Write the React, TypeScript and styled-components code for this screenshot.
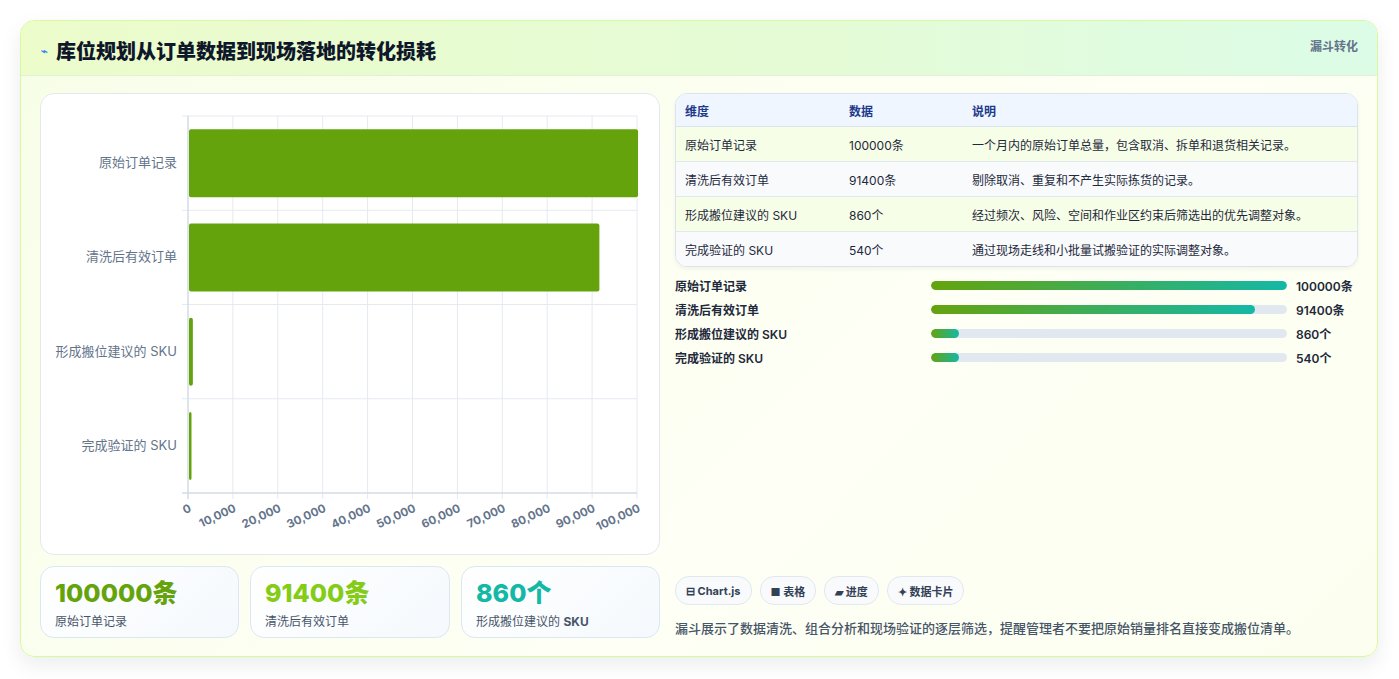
import React from "react";
import styled, { createGlobalStyle } from "styled-components";

const Global = createGlobalStyle`
  body { margin: 0; background: #fff; font-family: Inter, "Noto Sans CJK SC", sans-serif; }
`;
const Page = styled.div`padding: 20px 21px 22px 20px;`;
const Card = styled.div`
  border: 1px solid #d9f99d; border-radius: 14px; overflow: hidden;
  background: linear-gradient(135deg, #f7fee7 0%, #fefff5 60%, #fcfff0 100%);
  box-shadow: 0 8px 20px rgba(15,23,42,0.08);
`;
const Header = styled.div`
  height: 54px; display: flex; justify-content: space-between; align-items: flex-start;
  padding: 0 19px 0 20px; border-bottom: 1px solid #e2f0d5;
  background: linear-gradient(90deg, #ecfccb 0%, #e4fbd6 60%, #dcfce7 100%);
`;
const Title = styled.h1`
  margin: 15px 0 0; font-size: 20px; font-weight: 800; color: #0f172a; display: flex; align-items: center; gap: 8px;
`;
const Tag = styled.span`margin-top: 16px; font-size: 12px; font-weight: 700; color: #64748b;`;
const Body = styled.div`display: grid; grid-template-columns: 620px 1fr; gap: 15px; padding: 17px 19px 18px 19px;`;
const Left = styled.div`display: flex; flex-direction: column; gap: 11px;`;
const ChartBox = styled.div`
  height: 460px; background: #fff; border: 1px solid #e2e8f0; border-radius: 14px; position: relative;
`;
const Kpis = styled.div`display: grid; grid-template-columns: 199px 200px 199px; gap: 11px;`;
const Kpi = styled.div`
  height: 72px; border: 1px solid #dbe7f3; border-radius: 14px; background: linear-gradient(135deg, #fff, #f5f9fd);
  padding: 10px 14px; box-sizing: border-box;
`;
const KpiVal = styled.div<{ c: string }>`font-size: 25px; font-weight: 800; color: ${p => p.c}; line-height: 32px;`;
const KpiLbl = styled.div`font-size: 12px; color: #475569; margin-top: 3px;`;
const Right = styled.div`display: flex; flex-direction: column;`;
const Table = styled.table`
  width: 100%; border-collapse: separate; border-spacing: 0; border: 1px solid #dbe3ec; border-radius: 12px; overflow: hidden;
  font-size: 12px; color: #1e293b;
  box-shadow: 0 2px 4px rgba(15,23,42,0.05);
  th { text-align: left; color: #1e3a8a; font-weight: 600; background: #eff6ff; height: 32px; border-bottom: 1px solid #dbe3ec; }
  td { height: 34px; border-bottom: 1px solid #e2e8f0; }
  tr:last-child td { border-bottom: none; }
  tbody tr:nth-child(odd) td { background: #f7fee7; }
  tbody tr:nth-child(even) td { background: #f8fafc; }
  th, td { padding: 0 9px; }
`;
const Bars = styled.div`display: flex; flex-direction: column; gap: 7px; margin-top: 10px;`;
const BarRow = styled.div`
  display: grid; grid-template-columns: 247px 356px 1fr; gap: 9px; align-items: center;
  font-size: 12px; font-weight: 600; color: #1e293b; height: 17px; white-space: nowrap;
`;
const Track = styled.div`height: 9px; background: #e2e8f0; border-radius: 5px; overflow: hidden;`;
const Fill = styled.div`height: 100%; border-radius: 5px; background: linear-gradient(90deg, #65a30d, #14b8a6);`;
const Spacer = styled.div`flex: 1;`;
const Chips = styled.div`display: flex; gap: 8px;`;
const Chip = styled.span`
  height: 27px; padding: 0 10px; border: 1px solid #e2e8f0; border-radius: 14px; background: #f8fafc;
  font-size: 11px; font-weight: 700; color: #334155; display: flex; align-items: center; gap: 4px;
`;
const Note = styled.p`margin: 13px 0 1px; font-size: 13px; color: #475569; font-weight: 500;`;

const cats = [
  { n: "原始订单记录", v: 100000 },
  { n: "清洗后有效订单", v: 91400 },
  { n: "形成搬位建议的 SKU", v: 860 },
  { n: "完成验证的 SKU", v: 540 },
];

function Chart() {
  const x0 = 147, x1 = 596, y0 = 22, y1 = 399, W = 620, H = 460;
  const step = (y1 - y0) / 4;
  return (
    <svg width={W} height={H} style={{ position: "absolute", left: 0, top: 0 }}>
      {Array.from({ length: 11 }).map((_, i) => {
        const x = x0 + ((x1 - x0) * i) / 10;
        return <line key={i} x1={x} x2={x} y1={y0} y2={y1 + 6} stroke="#e5e9f0" />;
      })}
      {[0, 1, 2, 3, 4].map(i => (
        <line key={i} x1={x0 - 6} x2={x1} y1={y0 + step * i} y2={y0 + step * i} stroke="#e5e9f0" />
      ))}
      <line x1={x0 - 6} x2={x1} y1={y1} y2={y1} stroke="#cbd5e1" />
      <line x1={x0} x2={x0} y1={y0} y2={y1 + 6} stroke="#cbd5e1" />
      {cats.map((c, i) => {
        const cy = y0 + step * i + step / 2;
        const w = Math.max(2.5, ((x1 - x0) * c.v) / 100000);
        return (
          <g key={i}>
            <rect x={x0 + 1} y={cy - 34} width={w} height={68} rx={2} fill="#65a30d" />
            <text x={x0 - 11} y={cy + 4} textAnchor="end" fontSize={13} fill="#64748b" fontFamily="Inter, 'Noto Sans CJK SC', sans-serif">{c.n}</text>
          </g>
        );
      })}
      {Array.from({ length: 11 }).map((_, i) => {
        const x = x0 + ((x1 - x0) * i) / 10;
        return (
          <text key={i} x={x + 4} y={y1 + 18} textAnchor="end" fontSize={11.5} fontWeight={700} fill="#64748b"
            fontFamily="Inter, sans-serif" transform={`rotate(-25 ${x + 4} ${y1 + 18})`}>
            {(i * 10000).toLocaleString("en-US")}
          </text>
        );
      })}
    </svg>
  );
}

export default function App() {
  return (
    <Page>
      <Global />
      <Card>
        <Header>
          <Title><span style={{ fontSize: 11, color: "#3b82f6" }}>⌁</span>库位规划从订单数据到现场落地的转化损耗</Title>
          <Tag>漏斗转化</Tag>
        </Header>
        <Body>
          <Left>
            <ChartBox><Chart /></ChartBox>
            <Kpis>
              <Kpi><KpiVal c="#65a30d">100000条</KpiVal><KpiLbl>原始订单记录</KpiLbl></Kpi>
              <Kpi><KpiVal c="#84cc16">91400条</KpiVal><KpiLbl>清洗后有效订单</KpiLbl></Kpi>
              <Kpi><KpiVal c="#14b8a6">860个</KpiVal><KpiLbl>形成搬位建议的 <b>SKU</b></KpiLbl></Kpi>
            </Kpis>
          </Left>
          <Right>
            <Table>
              <colgroup><col style={{ width: 164 }} /><col style={{ width: 123 }} /><col /></colgroup>
              <thead><tr><th>维度</th><th>数据</th><th>说明</th></tr></thead>
              <tbody>
                <tr><td>原始订单记录</td><td>100000条</td><td>一个月内的原始订单总量，包含取消、拆单和退货相关记录。</td></tr>
                <tr><td>清洗后有效订单</td><td>91400条</td><td>剔除取消、重复和不产生实际拣货的记录。</td></tr>
                <tr><td>形成搬位建议的 SKU</td><td>860个</td><td>经过频次、风险、空间和作业区约束后筛选出的优先调整对象。</td></tr>
                <tr><td>完成验证的 SKU</td><td>540个</td><td>通过现场走线和小批量试搬验证的实际调整对象。</td></tr>
              </tbody>
            </Table>
            <Bars>
              {[["原始订单记录", 100, "100000条"], ["清洗后有效订单", 91, "91400条"], ["形成搬位建议的 SKU", 8, "860个"], ["完成验证的 SKU", 8, "540个"]].map(([n, p, v]) => (
                <BarRow key={n as string}>
                  <span>{n}</span>
                  <Track><Fill style={{ width: `${p}%` }} /></Track>
                  <span>{v}</span>
                </BarRow>
              ))}
            </Bars>
            <Spacer />
            <Chips>
              <Chip>⊟ Chart.js</Chip>
              <Chip>■ 表格</Chip>
              <Chip>▰ 进度</Chip>
              <Chip>✦ 数据卡片</Chip>
            </Chips>
            <Note>漏斗展示了数据清洗、组合分析和现场验证的逐层筛选，提醒管理者不要把原始销量排名直接变成搬位清单。</Note>
          </Right>
        </Body>
      </Card>
    </Page>
  );
}
